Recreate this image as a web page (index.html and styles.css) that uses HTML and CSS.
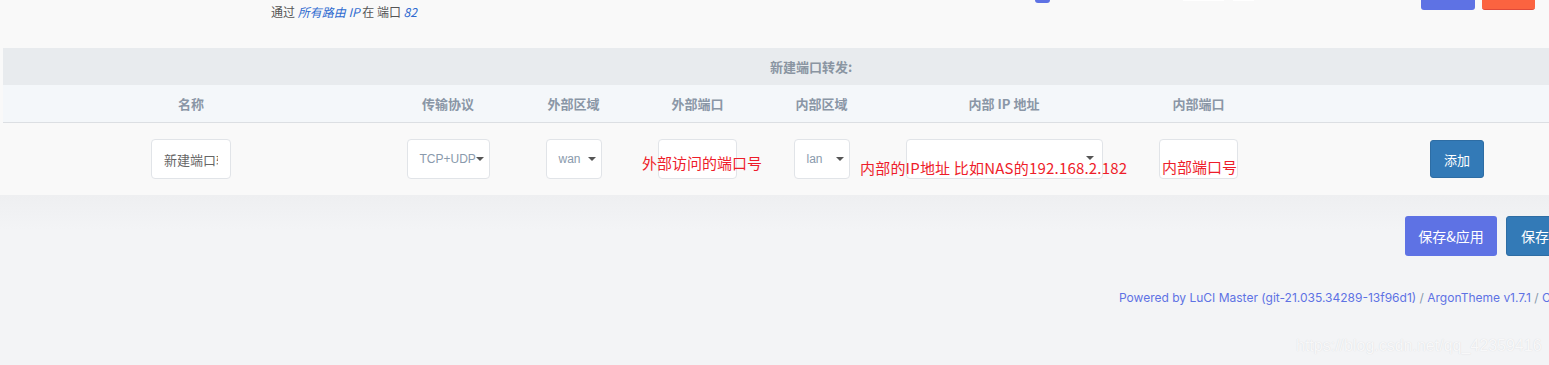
FILE: index.html
```html
<!DOCTYPE html>
<html lang="zh-CN">
<head>
<meta charset="utf-8">
<title>端口转发</title>
<link rel="stylesheet" href="styles.css">
</head>
<body>
<div class="page">
  <div class="card">
    <div class="prev-row">
      <div class="desc">通过 <em>所有路由 IP</em> 在 端口 <em>82</em></div>
      <span class="chk-tail"></span>
      <span class="field-tail t1"></span>
      <span class="field-tail t2"></span>
      <span class="btn-tail edit"></span>
      <span class="btn-tail del"></span>
    </div>
    <div class="section">
      <div class="section-title">新建端口转发:</div>
      <div class="grid thead">
        <div>名称</div>
        <div>传输协议</div>
        <div>外部区域</div>
        <div>外部端口</div>
        <div>内部区域</div>
        <div>内部 IP 地址</div>
        <div>内部端口</div>
        <div></div>
      </div>
      <div class="grid trow">
        <div class="cell"><input class="inp name" type="text" value="新建端口转发"></div>
        <div class="cell"><span class="sel proto">TCP+UDP</span></div>
        <div class="cell"><span class="sel zone">wan</span></div>
        <div class="cell"><input class="inp port" type="text" value=""><span class="note n1">外部访问的端口号</span></div>
        <div class="cell"><span class="sel zone">lan</span></div>
        <div class="cell"><span class="sel ip"></span><span class="note n2">内部的IP地址 比如NAS的192.168.2.182</span></div>
        <div class="cell"><input class="inp port" type="text" value=""><span class="note n3">内部端口号</span></div>
        <div class="cell start"><button class="btn add">添加</button></div>
      </div>
    </div>
  </div>
  <div class="lower">
    <div class="actions">
      <button class="btn apply">保存&amp;应用</button>
      <button class="btn save">保存</button>
    </div>
    <div class="footer"><a>Powered by LuCI Master (git-21.035.34289-13f96d1)</a> / <a>ArgonTheme v1.7.1</a> / <a>OpenWrt</a></div>
  </div>
  <div class="watermark">https://blog.csdn.net/qq_42359416</div>
</div>
</body>
</html>
```
FILE: styles.css
```css
html, body {
  margin: 0;
  padding: 0;
}
body {
  width: 1549px;
  height: 365px;
  overflow: hidden;
  background: #f3f4f6;
  font-family: "Noto Sans CJK SC", "Liberation Sans", sans-serif;
}
.page {
  position: relative;
  width: 1700px;
  height: 365px;
}
.card {
  background: #f9f9f9;
}
.prev-row {
  display: flex;
  align-items: flex-start;
  height: 48px;
}
.desc {
  margin-left: 271px;
  margin-top: 3px;
  font-size: 12px;
  line-height: 18px;
  color: #555;
  width: 764px;
}
.desc em {
  color: #2f6bd0;
}
.chk-tail {
  width: 15px;
  height: 3px;
  background: #5e72e4;
  border-radius: 0 0 3px 3px;
}
.field-tail {
  height: 1px;
  background: #fff;
}
.t1 { width: 41px; margin-left: 133px; }
.t2 { width: 21px; margin-left: 9px; }
.btn-tail {
  height: 10px;
  border-radius: 0 0 3px 3px;
}
.edit { width: 54px; margin-left: 167px; background: #5e72e4; }
.del { width: 53px; margin-left: 7px; background: #fb6340; border-bottom: 1px solid #e04a3a; height: 9px; }

.section {
  margin-left: 3px;
  width: 1624px;
}
.section-title {
  height: 37px;
  line-height: 37px;
  background: #e8ebee;
  text-align: center;
  font-size: 13px;
  font-weight: bold;
  color: #8a95a2;
  padding-right: 8px;
}
.grid {
  display: grid;
  grid-template-columns: 376px 138px 113px 135px 113px 252px 137px 360px;
}
.thead {
  height: 37px;
  line-height: 37px;
  background: #f4f7fa;
  border-bottom: 1px solid #dcdfe3;
  font-size: 13px;
  font-weight: bold;
  color: #8a96a6;
  text-align: center;
}
.trow {
  height: 72px;
}
.cell {
  position: relative;
  display: flex;
  align-items: center;
  justify-content: center;
}
.cell.start {
  justify-content: flex-start;
}
.inp {
  box-sizing: border-box;
  height: 40px;
  width: 80px;
  border: 1px solid #e1e4e8;
  border-radius: 4px;
  background: #fff;
  padding: 0 12px 0 12px;
  font-family: "Noto Sans CJK SC", sans-serif;
  font-size: 13px;
  color: #666;
  outline: none;
}
.inp.port {
  width: 79px;
}
.sel {
  position: relative;
  box-sizing: border-box;
  height: 40px;
  line-height: 38px;
  border: 1px solid #e1e4e8;
  border-radius: 4px;
  background: #fff;
  padding-left: 12px;
  font-family: "Liberation Sans", Arial, sans-serif;
  font-size: 12px;
  color: #8a9aac;
}
.sel::after {
  content: "";
  position: absolute;
  top: 17px;
  right: 5px;
  border-left: 4px solid transparent;
  border-right: 4px solid transparent;
  border-top: 4px solid #555;
}
.proto { width: 83px; }
.zone { width: 56px; }
.ip { width: 197px; }
.ip::after { right: 8px; top: 16px; }
.note {
  position: absolute;
  font-family: "Noto Sans CJK SC", sans-serif;
  font-size: 15px;
  line-height: 20px;
  color: #ee1d2a;
  white-space: nowrap;
}
.n1 { left: 12px; top: 30px; }
.n2 { left: -18px; top: 35px; letter-spacing: 0.2px; }
.n3 { left: 32px; top: 34px; }

.btn {
  border: 0;
  border-radius: 3px;
  color: #fff;
  font-family: "Noto Sans CJK SC", sans-serif;
  white-space: nowrap;
  cursor: pointer;
}
.add {
  margin-left: 163px;
  width: 54px;
  height: 38px;
  background: #337ab7;
  border: 1px solid #2e6da4;
  font-size: 13px;
}
.lower {
  height: 170px;
  background: linear-gradient(#eeeff1, #f3f4f6 35px);
}
.actions {
  display: flex;
  gap: 9px;
  padding-left: 1405px;
  padding-top: 21px;
}
.apply, .save {
  height: 40px;
  padding: 0 14px;
  font-size: 14px;
}
.apply { background: #5e72e4; width: 92px; padding: 0; }
.save { background: #337ab7; border: 1px solid #2e6da4; }
.footer {
  margin-top: 34px;
  padding-left: 1119px;
  font-family: Inter, "Liberation Sans", sans-serif;
  font-size: 12px;
  line-height: 16px;
  color: #8898aa;
  white-space: nowrap;
}
.footer a {
  color: #5e72e4;
}
.watermark {
  position: absolute;
  left: 1296px;
  top: 337px;
  font-family: "Liberation Sans", Arial, sans-serif;
  font-size: 16px;
  color: #f8f8f9;
  text-shadow: 0 0 1px #d4d6da;
  white-space: nowrap;
}
```
